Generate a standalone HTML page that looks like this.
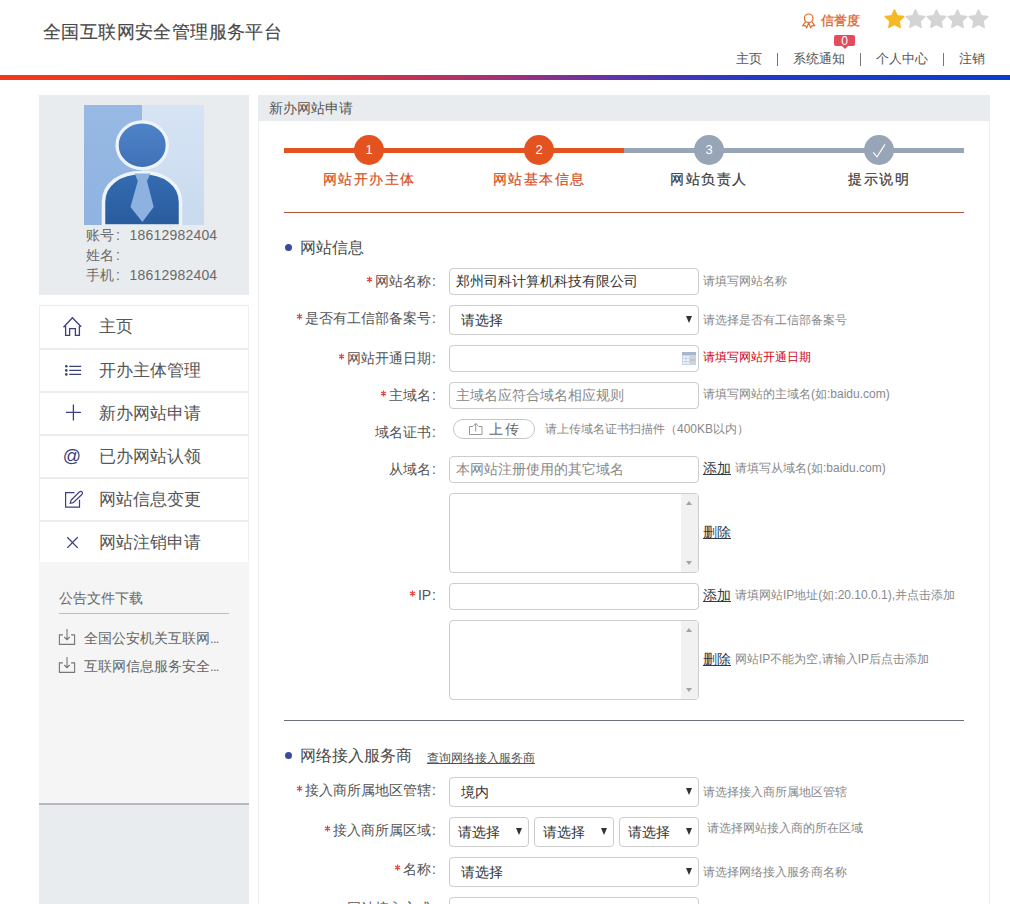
<!DOCTYPE html>
<html><head><meta charset="utf-8">
<style>
*{box-sizing:border-box;margin:0;padding:0}
html,body{width:1010px;height:904px;overflow:hidden;background:#fff;font-family:"Liberation Sans",sans-serif;color:#555}
.abs{position:absolute}
.title{left:43px;top:20px;font-size:18px;color:#484848;-webkit-text-stroke:0.15px #484848;letter-spacing:0.4px;white-space:nowrap;line-height:24px}
.xyd{left:821px;-webkit-text-stroke:0.3px #dc6429;top:12px;font-size:13px;color:#dc6429;line-height:18px;white-space:nowrap}
.badge{left:834px;top:35px;width:21px;height:11px;background:#e24c5c;border-radius:2px;color:#fff;font-size:12px;line-height:13px;text-align:center}
.badge:after{content:"";position:absolute;left:8px;top:11px;border-left:3px solid transparent;border-right:3px solid transparent;border-top:3px solid #e24c5c}
.nav{top:50px;font-size:13px;color:#555;line-height:18px;white-space:nowrap}
.bar{left:0;top:75px;width:1010px;height:5px;background:linear-gradient(90deg,#f4381c 0%,#ec3524 28%,#a23079 50%,#5a33ad 62%,#1f3ac6 76%,#0a3dcf 100%)}
/* left panel */
.lp{left:39px;top:95px;width:210px;height:200px;background:#e8ecef}
.info{left:86px;font-size:14px;color:#6a6a6a;line-height:20px;white-space:nowrap;letter-spacing:0.2px}
.info b{font-weight:normal;margin:0 9.5px 0 1.5px}
.menu{left:39px;top:305px;width:210px}
.mi{height:43px;border:1px solid #eef0f2;border-top:2px solid #ededed;border-bottom:none;background:#fff;position:relative;font-size:17px;color:#555;line-height:42px}
.mi:first-child{border-top:1px solid #ececec}
.mi span{position:absolute;left:59px;top:0}
.mi svg{position:absolute}
.lp2{left:39px;top:562px;width:210px;height:241px;background:#f5f5f5}
.lp3{left:39px;top:803px;width:210px;height:101px;background:#e8ecef;border-top:2px solid #b8babd}
/* right */
.rp{left:258px;top:95px;width:732px;height:809px;border-left:1px solid #eceef0;border-right:1px solid #eceef0}
.rph{left:258px;top:95px;width:732px;height:26px;background:#e8ecef;font-size:14px;color:#555;line-height:27px;padding-left:11px}
.sl{top:148px;height:5px}
.circ{width:30px;height:30px;border-radius:50%;color:#fff;font-size:13px;text-align:center;line-height:30px;top:135px}
.slab{top:170px;width:170px;text-align:center;font-size:14px;letter-spacing:1.5px;line-height:18px;-webkit-text-stroke:0.2px currentColor}
.dot{width:7px;height:7px;border-radius:50%;background:#3b4a9a}
.sec{font-size:16px;color:#4a4a4a;line-height:20px;white-space:nowrap}
.lab{width:200px;text-align:right;font-size:14px;color:#555;line-height:18px;white-space:nowrap;left:236px}
.lab i{font-style:normal;margin-right:2px;display:inline-block;position:relative;top:-3px}
.lab i svg{display:block}
.lab b{font-weight:normal;margin-left:1px}
.inp{left:449px;width:250px;height:27px;border:1px solid #ccc;border-radius:4px;background:#fff;font-size:14px;line-height:25px;padding-left:6px;color:#333;white-space:nowrap;overflow:hidden}
.ph{color:#888}
.sel{height:30px;padding-left:11px;line-height:29px}
.sel:after{content:"";position:absolute;right:6px;top:10px;border-left:3.5px solid transparent;border-right:3.5px solid transparent;border-top:7px solid #333}
.hint{left:703px;font-size:12px;color:#888;line-height:18px;white-space:nowrap}
.ta{left:449px;width:250px;height:80px;border:1px solid #ccc;border-radius:4px;background:#fff}
.ta .sb{position:absolute;right:0;top:0;width:17px;height:78px;background:#f1f1f1;border-radius:0 3px 3px 0}
.sb i{position:absolute;left:5px;width:0;height:0;border-left:3.5px solid transparent;border-right:3.5px solid transparent}
.sb .up{top:7px;border-bottom:4px solid #a3a3a3}
.sb .dn{bottom:7px;border-top:4px solid #a3a3a3}
.lnk{left:703px;font-size:14px;color:#2f3a48;text-decoration:underline;line-height:18px}
</style></head><body>
<div class="abs title">全国互联网安全管理服务平台</div>
<svg class="abs" style="left:801px;top:12px" width="16" height="17" viewBox="0 0 16 17"><circle cx="7.7" cy="6.3" r="4.3" fill="none" stroke="#e2692d" stroke-width="1.2"/><path d="M4.6,9.6 L1.5,13.8 L4.3,13.6 L5.6,16 L7.7,10.8 L9.8,16 L11.1,13.6 L13.9,13.8 L10.8,9.6" fill="none" stroke="#e2692d" stroke-width="1.1" stroke-linejoin="round"/></svg>
<div class="abs xyd">信誉度</div>
<svg class="abs" style="left:884px;top:9px" width="106" height="21" viewBox="0 0 106 21">
<path transform="translate(0,0)" d="M10.50,1.00 L13.26,6.80 L19.63,7.63 L14.97,12.05 L16.14,18.37 L10.50,15.30 L4.86,18.37 L6.03,12.05 L1.37,7.63 L7.74,6.80 Z" fill="#f6b823" stroke="#f6b823" stroke-linejoin="round" stroke-width="1.6"/>
<path transform="translate(21,0)" d="M10.50,1.00 L13.26,6.80 L19.63,7.63 L14.97,12.05 L16.14,18.37 L10.50,15.30 L4.86,18.37 L6.03,12.05 L1.37,7.63 L7.74,6.80 Z" fill="#d4d4d4" stroke="#d4d4d4" stroke-linejoin="round" stroke-width="1.6"/>
<path transform="translate(42,0)" d="M10.50,1.00 L13.26,6.80 L19.63,7.63 L14.97,12.05 L16.14,18.37 L10.50,15.30 L4.86,18.37 L6.03,12.05 L1.37,7.63 L7.74,6.80 Z" fill="#d4d4d4" stroke="#d4d4d4" stroke-linejoin="round" stroke-width="1.6"/>
<path transform="translate(63,0)" d="M10.50,1.00 L13.26,6.80 L19.63,7.63 L14.97,12.05 L16.14,18.37 L10.50,15.30 L4.86,18.37 L6.03,12.05 L1.37,7.63 L7.74,6.80 Z" fill="#d4d4d4" stroke="#d4d4d4" stroke-linejoin="round" stroke-width="1.6"/>
<path transform="translate(84,0)" d="M10.50,1.00 L13.26,6.80 L19.63,7.63 L14.97,12.05 L16.14,18.37 L10.50,15.30 L4.86,18.37 L6.03,12.05 L1.37,7.63 L7.74,6.80 Z" fill="#d4d4d4" stroke="#d4d4d4" stroke-linejoin="round" stroke-width="1.6"/>
</svg>
<div class="abs badge">0</div>
<div class="abs nav" style="left:736px">主页</div>
<div class="abs" style="left:777px;top:53px;width:1px;height:13px;background:#777"></div>
<div class="abs nav" style="left:793px">系统通知</div>
<div class="abs" style="left:860px;top:53px;width:1px;height:13px;background:#777"></div>
<div class="abs nav" style="left:876px">个人中心</div>
<div class="abs" style="left:943px;top:53px;width:1px;height:13px;background:#777"></div>
<div class="abs nav" style="left:959px">注销</div>
<div class="abs bar"></div>

<div class="abs lp"></div>
<svg class="abs" style="left:84px;top:105px" width="120" height="120" viewBox="0 0 120 120">
<defs>
<linearGradient id="gl" x1="0" y1="0" x2="0" y2="1"><stop offset="0" stop-color="#97b9e3"/><stop offset="1" stop-color="#8fb4e1"/></linearGradient>
<linearGradient id="gr" x1="0" y1="0" x2="0" y2="1"><stop offset="0" stop-color="#d6e4f4"/><stop offset="1" stop-color="#c9daee"/></linearGradient>
<linearGradient id="gh" x1="0" y1="0" x2="0" y2="1"><stop offset="0" stop-color="#4f84c8"/><stop offset="1" stop-color="#3f70b5"/></linearGradient>
<linearGradient id="gb" x1="0" y1="0" x2="0" y2="1"><stop offset="0" stop-color="#346cb2"/><stop offset="1" stop-color="#295b9e"/></linearGradient>
</defs>
<rect x="0" y="0" width="58" height="120" fill="url(#gl)"/>
<rect x="58" y="0" width="62" height="120" fill="url(#gr)"/>
<path d="M19.5,121 V97 C19.5,79 36,67.5 58,67.5 C80,67.5 96.5,79 96.5,97 V121 Z" fill="url(#gb)" stroke="#eef3f9" stroke-width="3.5"/>
<ellipse cx="58.2" cy="40.2" rx="25.1" ry="23.4" fill="url(#gh)" stroke="#eef3f9" stroke-width="3.3"/>
<path d="M50.5,68.5 H66.5 L63,76 H53.8 Z" fill="#8db2e0"/>
<path d="M53.8,76 H63 L69.7,102 L58.4,117 L46.5,102 Z" fill="#8db2e0"/>
</svg>
<div class="abs info" style="top:225px">账号<b>:</b>18612982404</div>
<div class="abs info" style="top:245px">姓名<b>:</b></div>
<div class="abs info" style="top:265px">手机<b>:</b>18612982404</div>

<div class="abs menu">
<div class="mi"><svg width="30" height="30" viewBox="0 0 30 30" style="left:18px;top:6px"><path d="M5.5,15.3 L14.4,5.7 L23.2,14.8" fill="none" stroke="#3a3f80" stroke-width="1.3"/><path d="M7.6,14 V23.3 H11.6 V16.6 H17.4 V23.3 H21.4 V14" fill="none" stroke="#3a3f80" stroke-width="1.3"/></svg><span>主页</span></div>
<div class="mi"><svg width="30" height="30" viewBox="0 0 30 30" style="left:18px;top:6px"><g fill="#3a3f80"><circle cx="8.3" cy="10.3" r="1.3"/><circle cx="8.3" cy="14.4" r="1.3"/><circle cx="8.3" cy="18.4" r="1.3"/></g><g stroke="#3a3f80" stroke-width="1.3"><path d="M11.3,10.3 H23.2 M11.3,14.4 H23.2 M11.3,18.4 H23.2"/></g></svg><span>开办主体管理</span></div>
<div class="mi"><svg width="30" height="30" viewBox="0 0 30 30" style="left:18px;top:6px"><path d="M15.4,5.5 V21.6 M8,13.4 H22.9" stroke="#3a3f80" stroke-width="1.3"/></svg><span>新办网站申请</span></div>
<div class="mi"><svg width="30" height="30" viewBox="0 0 30 30" style="left:18px;top:6px"><text x="14" y="19.5" text-anchor="middle" font-family="Liberation Sans" font-size="18" fill="#3a3f80">@</text></svg><span>已办网站认领</span></div>
<div class="mi"><svg width="30" height="30" viewBox="0 0 30 30" style="left:18px;top:6px"><path d="M16.5,7.6 H7.6 V22.2 H21.5 V14.8" fill="none" stroke="#3a3f80" stroke-width="1.2"/><path d="M13,15.2 L21.3,7 Q23.2,5.8 24.3,7.2 Q25,8.6 23.6,9.8 L15.2,17.6 L12.2,18.3 Z" fill="none" stroke="#3a3f80" stroke-width="1.2"/></svg><span>网站信息变更</span></div>
<div class="mi"><svg width="30" height="30" viewBox="0 0 30 30" style="left:18px;top:6px"><path d="M9.3,9.3 L19.7,19.9 M19.7,9.3 L9.3,19.9" stroke="#3a3f80" stroke-width="1.3"/></svg><span>网站注销申请</span></div>
</div>
<div class="abs lp2"></div>
<div class="abs" style="left:59px;top:589px;font-size:14px;color:#666;line-height:18px;white-space:nowrap">公告文件下载</div>
<div class="abs" style="left:59px;top:613px;width:170px;height:1px;background:#bdbdbd"></div>
<svg class="abs" style="left:58px;top:628px" width="18" height="18" viewBox="0 0 18 18"><path d="M4.9,6.9 H1.4 V16.4 H16.6 V6.9 H13.1" fill="none" stroke="#777" stroke-width="1.1"/><path d="M9,1 V11.5 M6.3,9 L9,11.7 L11.7,9" fill="none" stroke="#777" stroke-width="1.1"/></svg>
<div class="abs" style="left:84px;top:629px;font-size:14px;color:#666;line-height:18px;white-space:nowrap">全国公安机关互联网<span style="font-size:13px;letter-spacing:-0.7px">...</span></div>
<svg class="abs" style="left:58px;top:656px" width="18" height="18" viewBox="0 0 18 18"><path d="M4.9,6.9 H1.4 V16.4 H16.6 V6.9 H13.1" fill="none" stroke="#777" stroke-width="1.1"/><path d="M9,1 V11.5 M6.3,9 L9,11.7 L11.7,9" fill="none" stroke="#777" stroke-width="1.1"/></svg>
<div class="abs" style="left:84px;top:657px;font-size:14px;color:#666;line-height:18px;white-space:nowrap">互联网信息服务安全<span style="font-size:13px;letter-spacing:-0.7px">...</span></div>
<div class="abs lp3"></div>

<div class="abs rp"></div>
<div class="abs rph">新办网站申请</div>
<div class="abs sl" style="left:284px;width:340px;background:#e4531f"></div>
<div class="abs sl" style="left:624px;width:340px;background:#98a5b6"></div>
<div class="abs circ" style="left:354px;background:#e4531f">1</div>
<div class="abs circ" style="left:524px;background:#e4531f">2</div>
<div class="abs circ" style="left:694px;background:#98a5b6">3</div>
<div class="abs circ" style="left:864px;background:#98a5b6"></div>
<svg class="abs" style="left:864px;top:135px" width="30" height="30" viewBox="0 0 30 30"><path d="M9.2,17.3 L13,21.9 L21,9.4" fill="none" stroke="#fff" stroke-width="1.1"/></svg>
<div class="abs slab" style="left:284px;color:#d54f22">网站开办主体</div>
<div class="abs slab" style="left:454px;color:#d54f22">网站基本信息</div>
<div class="abs slab" style="left:624px;color:#3a3a3a">网站负责人</div>
<div class="abs slab" style="left:794px;color:#3a3a3a">提示说明</div>
<div class="abs" style="left:284px;top:212px;width:680px;height:1px;background:#b5533d"></div>

<div class="abs dot" style="left:285px;top:244px"></div>
<div class="abs sec" style="left:300px;top:238px">网站信息</div>

<div class="abs lab" style="top:272px"><i><svg width="7" height="7" viewBox="0 0 7 7"><path d="M3.5,0.6 V6.4 M0.99,2.05 L6.01,4.95 M0.99,4.95 L6.01,2.05" stroke="#e8433a" stroke-width="1.25"/></svg></i>网站名称<b>:</b></div>
<div class="abs inp" style="top:268px">郑州司科计算机科技有限公司</div>
<div class="abs hint" style="top:272px">请填写网站名称</div>

<div class="abs lab" style="top:309px"><i><svg width="7" height="7" viewBox="0 0 7 7"><path d="M3.5,0.6 V6.4 M0.99,2.05 L6.01,4.95 M0.99,4.95 L6.01,2.05" stroke="#e8433a" stroke-width="1.25"/></svg></i>是否有工信部备案号<b>:</b></div>
<div class="abs inp sel" style="top:305px">请选择</div>
<div class="abs hint" style="top:311px">请选择是否有工信部备案号</div>

<div class="abs lab" style="top:349px"><i><svg width="7" height="7" viewBox="0 0 7 7"><path d="M3.5,0.6 V6.4 M0.99,2.05 L6.01,4.95 M0.99,4.95 L6.01,2.05" stroke="#e8433a" stroke-width="1.25"/></svg></i>网站开通日期<b>:</b></div>
<div class="abs inp" style="top:345px"></div>
<svg class="abs" style="left:682px;top:352px" width="14" height="13" viewBox="0 0 14 13"><rect x="0" y="0" width="14" height="13" fill="#c7d5ea"/><rect x="0" y="0" width="14" height="3" fill="#a9b6c9"/><g fill="#eef3fb"><rect x="1" y="4" width="2.5" height="2"/><rect x="4.5" y="4" width="2.5" height="2"/><rect x="1" y="7" width="2.5" height="2"/><rect x="4.5" y="7" width="2.5" height="2"/><rect x="1" y="10" width="2.5" height="2"/><rect x="4.5" y="10" width="2.5" height="2"/></g><rect x="8" y="7" width="5" height="2" fill="#d9c3a8"/></svg>
<div class="abs hint" style="top:348px;color:#d0021b">请填写网站开通日期</div>

<div class="abs lab" style="top:386px"><i><svg width="7" height="7" viewBox="0 0 7 7"><path d="M3.5,0.6 V6.4 M0.99,2.05 L6.01,4.95 M0.99,4.95 L6.01,2.05" stroke="#e8433a" stroke-width="1.25"/></svg></i>主域名<b>:</b></div>
<div class="abs inp ph" style="top:382px">主域名应符合域名相应规则</div>
<div class="abs hint" style="top:385px">请填写网站的主域名(如:baidu.com)</div>

<div class="abs lab" style="top:423px">域名证书<b>:</b></div>
<div class="abs" style="left:453px;top:419px;width:82px;height:20px;border:1px solid #c4c4c4;border-radius:10px;font-size:14px;line-height:18px;color:#666;padding-left:35px;letter-spacing:1.5px">上传</div>
<svg class="abs" style="left:468px;top:422px" width="16" height="14" viewBox="0 0 16 14"><path d="M5,4.5 H1.5 V12.5 H14 V4.5 H10.5" fill="none" stroke="#8a8a8a" stroke-width="0.9"/><path d="M7.7,1.5 V9.5 M5.3,3.9 L7.7,1.5 L10.1,3.9" fill="none" stroke="#8a8a8a" stroke-width="0.9"/></svg>
<div class="abs hint" style="left:545px;top:420px">请上传域名证书扫描件（400KB以内）</div>

<div class="abs lab" style="top:460px">从域名<b>:</b></div>
<div class="abs inp ph" style="top:456px">本网站注册使用的其它域名</div>
<div class="abs lnk" style="top:459px">添加</div>
<div class="abs hint" style="left:735px;top:459px">请填写从域名(如:baidu.com)</div>

<div class="abs ta" style="top:493px"><div class="sb"><i class="up"></i><i class="dn"></i></div></div>
<div class="abs lnk" style="top:523px">删除</div>

<div class="abs lab" style="top:586px"><i><svg width="7" height="7" viewBox="0 0 7 7"><path d="M3.5,0.6 V6.4 M0.99,2.05 L6.01,4.95 M0.99,4.95 L6.01,2.05" stroke="#e8433a" stroke-width="1.25"/></svg></i>IP<b>:</b></div>
<div class="abs inp" style="top:583px"></div>
<div class="abs lnk" style="top:586px">添加</div>
<div class="abs hint" style="left:735px;top:586px">请填网站IP地址(如:20.10.0.1),并点击添加</div>

<div class="abs ta" style="top:620px"><div class="sb"><i class="up"></i><i class="dn"></i></div></div>
<div class="abs lnk" style="top:650px">删除</div>
<div class="abs hint" style="left:735px;top:650px">网站IP不能为空,请输入IP后点击添加</div>

<div class="abs" style="left:284px;top:720px;width:680px;height:1px;background:#6c707c"></div>

<div class="abs dot" style="left:285px;top:752px"></div>
<div class="abs sec" style="left:300px;top:746px">网络接入服务商</div>
<div class="abs lnk" style="left:427px;top:749px;font-size:12px;color:#505050">查询网络接入服务商</div>

<div class="abs lab" style="top:781px"><i><svg width="7" height="7" viewBox="0 0 7 7"><path d="M3.5,0.6 V6.4 M0.99,2.05 L6.01,4.95 M0.99,4.95 L6.01,2.05" stroke="#e8433a" stroke-width="1.25"/></svg></i>接入商所属地区管辖<b>:</b></div>
<div class="abs inp sel" style="top:777px">境内</div>
<div class="abs hint" style="top:783px">请选择接入商所属地区管辖</div>

<div class="abs lab" style="top:821px"><i><svg width="7" height="7" viewBox="0 0 7 7"><path d="M3.5,0.6 V6.4 M0.99,2.05 L6.01,4.95 M0.99,4.95 L6.01,2.05" stroke="#e8433a" stroke-width="1.25"/></svg></i>接入商所属区域<b>:</b></div>
<div class="abs inp sel" style="top:817px;width:80px;padding-left:8px">请选择</div>
<div class="abs inp sel" style="top:817px;left:534px;width:80px;padding-left:8px">请选择</div>
<div class="abs inp sel" style="top:817px;left:619px;width:80px;padding-left:8px">请选择</div>
<div class="abs hint" style="left:707px;top:819px">请选择网站接入商的所在区域</div>

<div class="abs lab" style="top:860px"><i><svg width="7" height="7" viewBox="0 0 7 7"><path d="M3.5,0.6 V6.4 M0.99,2.05 L6.01,4.95 M0.99,4.95 L6.01,2.05" stroke="#e8433a" stroke-width="1.25"/></svg></i>名称<b>:</b></div>
<div class="abs inp sel" style="top:857px">请选择</div>
<div class="abs hint" style="top:863px">请选择网络接入服务商名称</div>

<div class="abs lab" style="top:899px">网站接入方式<b>:</b></div>
<div class="abs inp sel" style="top:897px"></div>
</body></html>
